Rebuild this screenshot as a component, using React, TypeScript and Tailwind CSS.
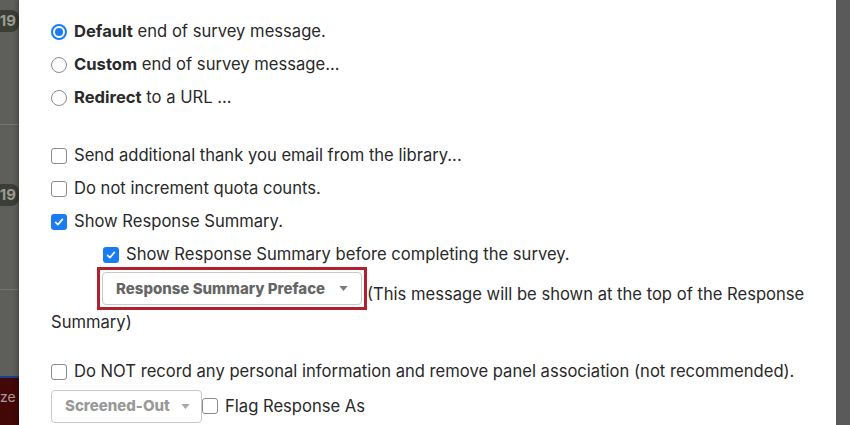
import React from 'react';

const Radio = ({ checked }: { checked?: boolean }) =>
  checked ? (
    <span className="flex h-[16px] w-[16px] shrink-0 items-center justify-center rounded-full border-2 border-[#1a7cf5] bg-white">
      <span className="h-[8px] w-[8px] rounded-full bg-[#1a7cf5]" />
    </span>
  ) : (
    <span className="h-[16px] w-[16px] shrink-0 rounded-full border border-[#8c8c8c] bg-white" />
  );

const Check = ({ checked }: { checked?: boolean }) =>
  checked ? (
    <span className="flex h-[16px] w-[16px] shrink-0 items-center justify-center rounded-[3px] bg-[#1a7cf5]">
      <svg viewBox="0 0 16 16" className="h-[12px] w-[12px]">
        <path d="M3.5 8.5 L6.5 11.5 L12.5 4.5" fill="none" stroke="white" strokeWidth="2.2" strokeLinecap="round" strokeLinejoin="round" />
      </svg>
    </span>
  ) : (
    <span className="h-[16px] w-[16px] shrink-0 rounded-[3px] border border-[#8c8c8c] bg-white" />
  );

const Caret = ({ color }: { color: string }) => (
  <svg viewBox="0 0 10 6" className="h-[5px] w-[9px]">
    <path d="M0 0 L10 0 L5 6 Z" fill={color} />
  </svg>
);

const SideStrip = () => (
  <div className="flex w-[19px] shrink-0 flex-col bg-[#5e5f5b] text-[15px] font-bold text-[#9a9b93]">
    <div className="h-[125px] border-b border-[#74756f] pt-[10px]">
      <span className="flex h-[22px] w-[19px] items-center justify-end rounded-r-[8px] bg-[#3b3e34] pr-[3px]">19</span>
    </div>
    <div className="h-[165px] border-b border-[#74756f] pt-[59px]">
      <span className="flex h-[22px] w-[19px] items-center justify-end rounded-r-[8px] bg-[#3b3e34] pr-[3px]">19</span>
    </div>
    <div className="h-[86px]" />
    <div className="h-[2px] bg-[#1d3f8a]" />
    <div className="flex-1 bg-[#420707] pt-[8px] text-[14px] font-normal text-[#a89a9a]">ze</div>
  </div>
);

export default function App() {
  return (
    <div className="flex h-[425px] w-[850px] overflow-hidden bg-[#5a5a5a] font-['Inter',sans-serif] text-[16.6px] text-[#2a2a2a]">
      <SideStrip />
      <div className="w-[817px] shrink-0 bg-white pl-[32px] pt-[15px] shadow-[-2px_0_4px_rgba(0,0,0,0.25)]">
        <div className="flex h-[33px] items-center gap-[7px]">
          <Radio checked />
          <span><b>Default</b> end of survey message.</span>
        </div>
        <div className="flex h-[33px] items-center gap-[7px]">
          <Radio />
          <span><b>Custom</b> end of survey message...</span>
        </div>
        <div className="flex h-[33px] items-center gap-[7px]">
          <Radio />
          <span><b>Redirect</b> to a URL ...</span>
        </div>

        <div className="mt-[25px] flex h-[33px] items-center gap-[7px]">
          <Check />
          <span>Send additional thank you email from the library...</span>
        </div>
        <div className="flex h-[33px] items-center gap-[7px]">
          <Check />
          <span>Do not increment quota counts.</span>
        </div>
        <div className="flex h-[33px] items-center gap-[7px]">
          <Check checked />
          <span>Show Response Summary.</span>
        </div>
        <div className="ml-[52px] flex h-[33px] items-center gap-[7px]">
          <Check checked />
          <span>Show Response Summary before completing the survey.</span>
        </div>

        <p className="-mt-[4px] pr-[20px] leading-[24px]">
          <span className="ml-[46px] inline-block border-[3px] border-[#b1202f] p-[2px] align-[6px]">
            <span className="flex h-[33px] w-[260px] items-center justify-between rounded-[4px] border border-[#c9c9c9] bg-white pl-[13px] pr-[13px] text-[15px] font-extrabold text-[#666666]">
              Response Summary Preface
              <Caret color="#7a7a7a" />
            </span>
          </span>
          (This message will be shown at the top of the Response Summary)
        </p>

        <div className="mt-[21px] flex h-[33px] items-center gap-[7px]">
          <Check />
          <span>Do NOT record any personal information and remove panel association (not recommended).</span>
        </div>
        <div className="mt-[2px] flex items-center gap-[7px]">
          <span className="flex h-[33px] w-[151px] items-center justify-between rounded-[4px] border border-[#c9c9c9] bg-white pl-[13px] pr-[11px] text-[15px] font-extrabold text-[#999999]">
            Screened-Out
            <Caret color="#a8a8a8" />
          </span>
          <span className="-ml-[7px] flex items-center gap-[7px]">
            <Check />
            <span>Flag Response As</span>
          </span>
        </div>
      </div>
    </div>
  );
}
